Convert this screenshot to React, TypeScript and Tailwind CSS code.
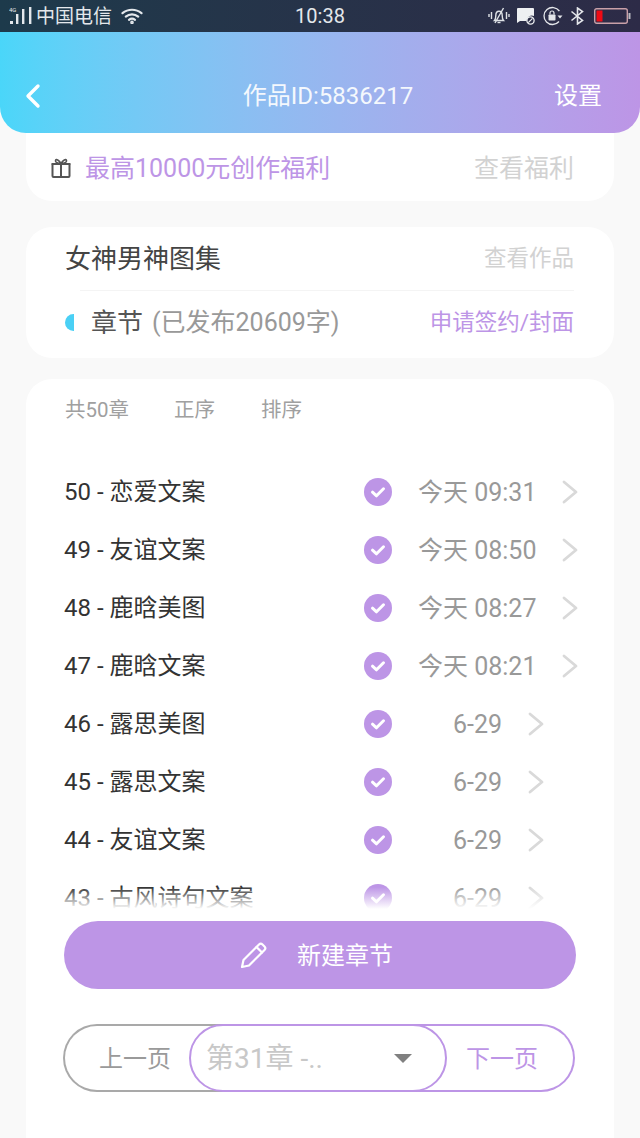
import React from "react";

const FONT = "font-['Roboto','Noto_Sans_CJK_SC',sans-serif]";

const rows = [
  { t: "50 - 恋爱文案", d: "今天 09:31", today: true },
  { t: "49 - 友谊文案", d: "今天 08:50", today: true },
  { t: "48 - 鹿晗美图", d: "今天 08:27", today: true },
  { t: "47 - 鹿晗文案", d: "今天 08:21", today: true },
  { t: "46 - 露思美图", d: "6-29", today: false },
  { t: "45 - 露思文案", d: "6-29", today: false },
  { t: "44 - 友谊文案", d: "6-29", today: false },
  { t: "43 - 古风诗句文案", d: "6-29", today: false },
];

function StatusBar() {
  return (
    <div className="h-8 shrink-0 flex items-center justify-between bg-gradient-to-r from-[#1d3a4b] to-[#2d2b47] pl-[9px] pr-[9px] text-[#e4e8ec]">
      <div className="flex items-center w-[200px]">
        <svg width="25" height="20" viewBox="0 0 25 20" fill="none">
          <text x="0" y="6" fontSize="6" fill="#e4e8ec" fontFamily="Roboto">4G</text>
          <rect x="1" y="15" width="3" height="3" fill="#e4e8ec" />
          <rect x="7" y="8" width="2.4" height="10" fill="#e4e8ec" />
          <rect x="13" y="3" width="2.4" height="15" fill="#e4e8ec" />
          <rect x="20" y="1" width="2.4" height="17" fill="#e4e8ec" />
        </svg>
        <span className="ml-[2px] text-[19px] leading-none">中国电信</span>
        <svg className="ml-[9px]" width="22" height="16" viewBox="0 0 22 16" fill="none" stroke="#e4e8ec" strokeWidth="2.2" strokeLinecap="round">
          <path d="M1.5 5.2C7 .6 15 .6 20.5 5.2" />
          <path d="M4.8 8.6c3.6-3 8.8-3 12.4 0" />
          <path d="M8 11.8c1.8-1.4 4.2-1.4 6 0" />
          <circle cx="11" cy="14.4" r=".7" fill="#e4e8ec" />
        </svg>
      </div>
      <span className="text-[20px] leading-none">10:38</span>
      <div className="flex items-center justify-end w-[200px]">
        <svg width="22" height="20" viewBox="0 0 22 20" fill="none" stroke="#dfe2e6" strokeWidth="1.4">
          <path d="M6.5 14.5c1-1 1.3-2 1.3-5 0-2.4 1.3-4.2 3.2-4.2s3.2 1.8 3.2 4.2c0 3 .3 4 1.3 5z" />
          <path d="M15.5 2 7 17" />
          <path d="M9.5 16.5h3" />
          <path d="M3.5 6v7M1 8v3M18.5 6v7M21 8v3" />
        </svg>
        <svg className="ml-[6px]" width="19" height="18" viewBox="0 0 19 18">
          <path d="M2 1h15a1 1 0 0 1 1 1v7a5.5 5.5 0 0 0-7.5 5H4L1 16V2a1 1 0 0 1 1-1z" fill="#eef0f2" />
          <circle cx="14.5" cy="13.5" r="3.6" fill="none" stroke="#eef0f2" strokeWidth="1.3" />
          <path d="M12.3 15.6l4.2-4.2" stroke="#eef0f2" strokeWidth="1.2" />
        </svg>
        <svg className="ml-[7px]" width="21" height="20" viewBox="0 0 21 20" fill="none">
          <path d="M17 15.5A8.5 8.5 0 1 1 17.4 5" stroke="#e4e6ea" strokeWidth="1.3" />
          <path d="M15.5 9.5h5L18 12.5z" fill="#e4e6ea" />
          <rect x="6.5" y="8.5" width="7" height="6" rx=".8" fill="#e4e6ea" />
          <path d="M8 8.5V7a2 2 0 0 1 4 0v1.5" stroke="#e4e6ea" strokeWidth="1.2" />
        </svg>
        <svg className="ml-[7px]" width="15" height="18" viewBox="0 0 15 18" fill="none" stroke="#e4e6ea" strokeWidth="1.6">
          <path d="M1.5 4.5l11 9L7.5 17V1l5 3.5-11 9" />
        </svg>
        <svg className="ml-[9px]" width="37" height="16" viewBox="0 0 37 16" fill="none">
          <rect x=".7" y=".7" width="32.6" height="14.6" rx="2" stroke="#c9a0a8" strokeWidth="1.4" />
          <rect x="2.5" y="2.5" width="6" height="11" fill="#f00a14" />
          <rect x="34.5" y="5" width="2" height="6" fill="#b8b8c0" />
        </svg>
      </div>
    </div>
  );
}

function Check() {
  return (
    <svg className="shrink-0" width="28" height="28" viewBox="0 0 28 28">
      <circle cx="14" cy="14" r="14" fill="#bd95e6" />
      <path d="M8.5 14.2l4 3.6 7-7" fill="none" stroke="#fff" strokeWidth="3" strokeLinecap="round" strokeLinejoin="round" />
    </svg>
  );
}

function Chevron() {
  return (
    <svg className="shrink-0" width="16" height="24" viewBox="0 0 16 24" fill="none" stroke="#d9d9d9" strokeWidth="2.8" strokeLinecap="round" strokeLinejoin="round">
      <path d="M2 2l12 10L2 22" />
    </svg>
  );
}

export default function App() {
  return (
    <div className={`${FONT} w-[640px] h-[1138px] overflow-hidden bg-[#f9f9f9] flex flex-col`}>
      <StatusBar />
      <header className="relative z-10 h-[101px] shrink-0 rounded-b-[26px] bg-gradient-to-r from-[#4ad6f9] to-[#bd95e6] flex items-center justify-between pt-[26px] pl-[24px] pr-[38px] text-white">
        <svg width="18" height="26" viewBox="0 0 18 26" fill="none" stroke="#fff" strokeWidth="3.4" strokeLinecap="round" strokeLinejoin="round">
          <path d="M14 3L4 13l10 10" />
        </svg>
        <span className="ml-[60px] text-[24px] leading-none text-[#f4f8fd]">作品ID:5836217</span>
        <span className="text-[24px] leading-none">设置</span>
      </header>

      <div className="mx-[26px] -mt-[30px] pt-[32px] h-[98px] shrink-0 bg-white rounded-b-[26px] flex items-center justify-between pl-[24px] pr-[40px]">
        <div className="flex items-center">
          <svg width="22" height="22" viewBox="0 0 22 22" fill="none" stroke="#555" strokeWidth="2">
            <rect x="2.5" y="7" width="17" height="13" rx="1" />
            <path d="M1.5 7h19M11 7v13" />
            <path d="M11 6.5C9 3 6 1.5 5.5 3.5S8 6.5 11 6.5zM11 6.5c2-3.5 5-5 5.5-3S14 6.5 11 6.5z" strokeWidth="1.6" />
          </svg>
          <span className="ml-[13px] text-[25px] leading-none text-[#bd95e6]">最高10000元创作福利</span>
        </div>
        <span className="text-[25px] leading-none text-[#d2d2d2]">查看福利</span>
      </div>

      <div className="mx-[26px] mt-[26px] h-[131px] shrink-0 bg-white rounded-[26px] flex flex-col">
        <div className="h-[63px] flex items-center justify-between pl-[39px] pr-[40px] ">
          <span className="text-[26px] leading-none text-[#444]">女神男神图集</span>
          <span className="text-[22.5px] leading-none text-[#d2d2d2]">查看作品</span>
        </div>
        <div className="ml-[54px] mr-[40px] h-px bg-[#f4f4f4]" />
        <div className="flex-1 flex items-center justify-between pl-[39px] pr-[40px] pb-[4px]">
          <div className="flex items-center">
            <span className="block w-[9px] h-[17px] rounded-l-full bg-[#4ad0f5]" />
            <span className="ml-[17px] text-[26px] leading-none text-[#555]">章节</span>
            <span className="ml-[9px] text-[25px] leading-none text-[#999]">(已发布20609字)</span>
          </div>
          <span className="text-[22.5px] leading-none text-[#bd95e6]">申请签约/封面</span>
        </div>
      </div>

      <div className="mx-[26px] mt-[21px] flex-1 bg-white rounded-t-[26px] flex flex-col pl-[39px] pr-[39px]">
        <div className="h-[62px] shrink-0 flex items-center text-[20.5px] leading-none text-[#a0a0a0]">
          <span>共50章</span>
          <span className="ml-[45px]">正序</span>
          <span className="ml-[46px]">排序</span>
        </div>
        <div className="relative mt-[22px] -mr-[10px] -ml-px h-[446px] shrink-0 overflow-hidden">
          {rows.map((r) => (
            <div key={r.t} className="h-[58px] flex items-center">
              <span className="w-[300px] shrink-0 whitespace-nowrap text-[24px] leading-none text-[#333]">{r.t}</span>
              <Check />
              <span className={`${r.today ? "ml-[26px]" : "ml-[61px]"} shrink-0 whitespace-nowrap text-[25px] leading-none text-[#999]`}>{r.d}</span>
              <span className="ml-[26px] flex shrink-0"><Chevron /></span>
            </div>
          ))}
          <div className="absolute left-0 right-0 bottom-0 h-[22px] bg-gradient-to-b from-white/0 to-white" />
        </div>

        <div className="mt-[12px] -ml-px -mr-px h-[68px] shrink-0 rounded-full bg-[#bd95e6] flex items-center justify-center pr-[7px] pt-[2px] text-white">
          <svg className="-mt-[2px]" width="28" height="28" viewBox="0 0 28 28" fill="none" stroke="#fff" strokeWidth="2.2" strokeLinejoin="round" strokeLinecap="round">
            <path d="M2 26l1.5-7L19 3.5a2.5 2.5 0 0 1 3.5 0l2 2a2.5 2.5 0 0 1 0 3.5L9 24.5z" />
            <path d="M16.5 6l5.5 5.5" />
          </svg>
          <span className="ml-[29px] text-[24px] leading-none">新建章节</span>
        </div>

        <div className="mt-[35px] -ml-[2px] h-[68px] shrink-0 flex text-[24px] leading-none">
          <div className="w-[190px] -mr-[64px] shrink-0 rounded-l-full border-2 border-r-0 border-[#a9a9a9] flex items-center pl-[34px] pt-[2px] text-[#9a9a9a]">
            上一页
          </div>
          <div className="relative z-10 w-[258px] shrink-0 rounded-full border-2 border-[#bd95e6] bg-white flex items-center justify-between pl-[15px] pr-[33px]">
            <span className="pt-[2px] text-[28px] leading-none text-[#c8c8c8]">第31章 -..</span>
            <span className="block w-0 h-0 border-l-[9px] border-r-[9px] border-t-[9px] border-l-transparent border-r-transparent border-t-[#808080]" />
          </div>
          <div className="flex-1 -ml-[64px] rounded-r-full border-2 border-l-0 border-[#bd95e6] flex items-center pl-[83px] pt-[2px] text-[#bd95e6]">
            下一页
          </div>
        </div>
      </div>
    </div>
  );
}
